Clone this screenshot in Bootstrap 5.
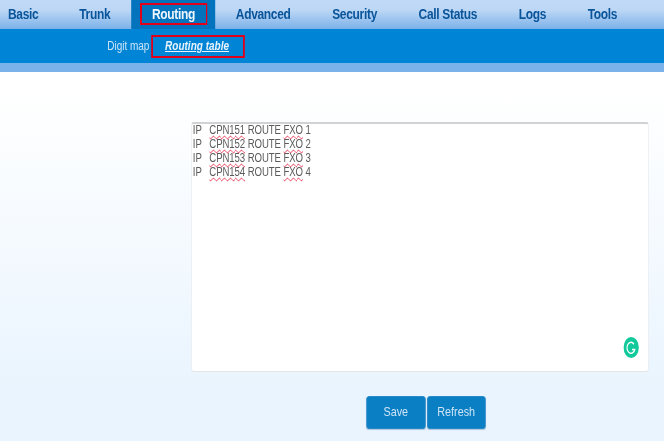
<!DOCTYPE html>
<html lang="en"><head><meta charset="utf-8"><title>Routing table</title>
<link href="https://cdn.jsdelivr.net/npm/bootstrap@5.3.0/dist/css/bootstrap.min.css" rel="stylesheet">
<style>
html,body{width:664px;height:441px;overflow:hidden;margin:0;background:#fff}
.viewport{width:664px;height:441px;overflow:hidden}
.stage{width:830px;height:441px;transform:scaleX(.8);transform-origin:0 0;font-family:"Liberation Sans",Arial,sans-serif;background:linear-gradient(#fff 72px,#fff 90px,#e9f4fe 400px);filter:blur(.45px)}
.topnav{height:29px;background:linear-gradient(#c0d9f6 0,#bcd7f5 35%,#7cb1e9 100%);margin:0;padding-left:0}
.topnav .tabitem{margin:0;list-style:none}
.topnav a{display:block;height:29px;line-height:28px;padding:0 26px;font-size:15px;letter-spacing:-.4px;font-weight:700;color:#0a5499;text-decoration:none;white-space:nowrap}
.topnav .tabitem:first-child a{padding:0 25px 0 10px}
.topnav a.on{background:#0473bd;color:#eef6fd;padding-right:25px}
.redbox{box-shadow:0 0 0 2px #e0001a}
.onlabel{display:inline-block;padding:0 13px;margin:0 -13px;height:18px;line-height:18px}
.subbar{height:34px;background:#0084d5;padding-left:134px;font-size:12.5px;color:#cfe6f8}
.subbar a{color:#e8f4fd;font-weight:700;font-style:italic}
.subcur{display:inline-block;width:113px;height:19px;line-height:18px;padding-right:2px;text-align:center;margin-left:4px}
.band{height:9px;background:#7cb2ea}
.boxwrap{padding:50px 19px 0 239px}
.editor{height:250px;border-radius:3px;border:1px solid #e2e6e9;border-top:2px solid #cfd3d6;background:#fff;padding:0 1px;font-size:12px;letter-spacing:-.1px;line-height:14px;color:#5a5a5a;white-space:pre;position:relative}
.lines{margin-top:-1px}
.sq{text-decoration:underline wavy #e8304e 1px;text-underline-offset:1px}
.gly{position:absolute;right:11px;bottom:13px;width:20px;height:21px}
.actions{padding:24px 0 0 458px;gap:2px}
.act{width:73.5px;height:33px;padding:0;border:1px solid #1f86c6;background:#0a7fc4;color:#cfe5f6;font-size:13.5px;border-radius:3px;box-shadow:0 1px 1px rgba(0,60,110,.25)}
</style></head>
<body>
<div class="viewport">
<div class="stage">
<ul class="topnav d-flex">
<li class="tabitem"><a href="#">Basic</a></li>
<li class="tabitem"><a href="#">Trunk</a></li>
<li class="tabitem"><a href="#" class="on"><span class="onlabel redbox">Routing</span></a></li>
<li class="tabitem"><a href="#">Advanced</a></li>
<li class="tabitem"><a href="#">Security</a></li>
<li class="tabitem"><a href="#">Call Status</a></li>
<li class="tabitem"><a href="#">Logs</a></li>
<li class="tabitem"><a href="#">Tools</a></li>
</ul>
<div class="subbar d-flex align-items-center"><span>Digit map</span><span class="subcur redbox"><a href="#">Routing table</a></span></div>
<div class="band"></div>
<div class="boxwrap"><div class="editor"><div class="lines"><div><span>IP   </span><span class="sq">CPN151</span><span> ROUTE </span><span class="sq">FXO</span><span> 1</span></div><div><span>IP   </span><span class="sq">CPN152</span><span> ROUTE </span><span class="sq">FXO</span><span> 2</span></div><div><span>IP   </span><span class="sq">CPN153</span><span> ROUTE </span><span class="sq">FXO</span><span> 3</span></div><div><span>IP   </span><span class="sq">CPN154</span><span> ROUTE </span><span class="sq">FXO</span><span> 4</span></div></div><svg class="gly" viewBox="0 0 19 21"><ellipse cx="9.5" cy="10.5" rx="9.5" ry="10.5" fill="#12c99b"/><path d="M13 7.2A5 5.5 0 1 0 14 12.5H10.5" fill="none" stroke="#fff" stroke-width="1.5"/></svg></div></div>
<div class="actions d-flex"><button class="btn act">Save</button><button class="btn act">Refresh</button></div>
</div>
</div>
<script src="https://cdn.jsdelivr.net/npm/bootstrap@5.3.0/dist/js/bootstrap.bundle.min.js"></script>
</body></html>
